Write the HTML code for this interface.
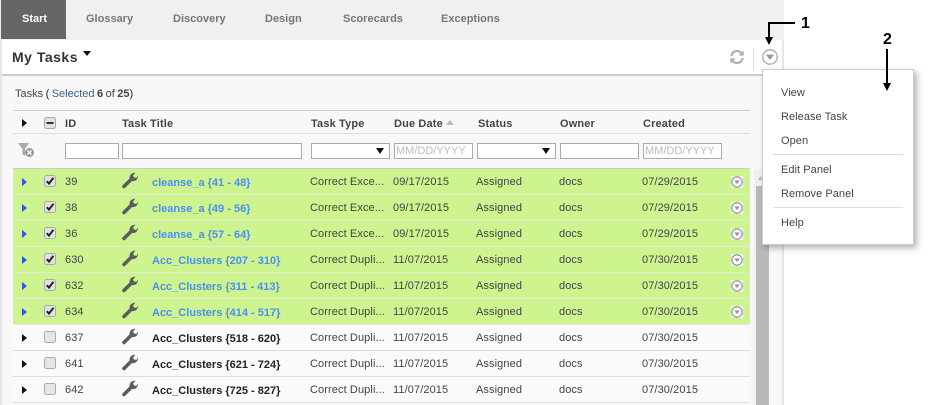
<!DOCTYPE html>
<html><head><meta charset="utf-8">
<style>
html,body{margin:0;padding:0;background:#fff}
body{width:930px;height:405px;overflow:hidden;position:relative;font:11px "Liberation Sans",Arial,sans-serif;color:#444;letter-spacing:.1px}
.a{position:absolute}
.t{position:absolute;white-space:nowrap}
.tab{position:absolute;top:13px;font-weight:bold;color:#777;line-height:13px;letter-spacing:0}
.h{position:absolute;top:118px;font-weight:bold;color:#444;line-height:13px;white-space:nowrap;letter-spacing:.15px}
.in{position:absolute;top:143px;height:14px;background:#fff;border:1px solid #aaa;box-sizing:content-box}
.ph{position:absolute;top:144px;color:#bbb;line-height:14px;letter-spacing:0}
.row{position:absolute;left:13px;width:737px;height:25px;background:#fafafa;border-bottom:1px solid #ddd}
.row.g{background:#cdf48e;border-bottom:1px solid #e2ecd4}
.row span{position:absolute;top:6px;line-height:14px;white-space:nowrap}
.row .ti{left:139px;top:7px;font-weight:bold;color:#222;letter-spacing:0}
.row.g .ti{color:#4a90f0}
.row svg{position:absolute}
.m{position:absolute;left:781px;line-height:13px;color:#444;white-space:nowrap;letter-spacing:.05px}
.s{position:absolute;left:773px;width:130px;height:1px;background:#ddd}
</style></head><body>
<svg width="0" height="0" style="position:absolute">
<defs>
<symbol id="wr" viewBox="0 0 17 17"><path d="M3 14.5 10.5 7" fill="none" stroke="#5c5c5c" stroke-width="3.6" stroke-linecap="round"/><path d="M8.6 6.4C8.2 3 11 .4 14.4 .8L12 3.6 13.2 5.6 15.6 5.8 16.8 3.4C17.4 7 14.6 9.6 11 9Z" fill="#5c5c5c"/></symbol>
<symbol id="ck" viewBox="0 0 12 12"><rect x=".5" y=".5" width="11" height="11" rx="2" fill="#e2e2e2" stroke="#aaa"/><path d="M2.8 6.2 5 8.6 9.4 2.8" fill="none" stroke="#222" stroke-width="2"/></symbol>
<symbol id="un" viewBox="0 0 12 12"><rect x=".5" y=".5" width="11" height="11" rx="2" fill="#e6e6e6" stroke="#aaa"/></symbol>
<symbol id="dd" viewBox="0 0 12 12"><rect width="12" height="12" fill="#fff"/><circle cx="6" cy="6" r="5.2" fill="none" stroke="#999" stroke-width="1.3"/><path d="M3.2 4.4H8.8L6 8.2Z" fill="#999"/></symbol>
</defs></svg>

<!-- tab bar -->
<div class="a" style="left:0;top:0;width:784px;height:40px;background:#f0f0f0"></div>
<div class="a" style="left:1px;top:0;width:65px;height:39px;background:#666"></div>
<div class="tab" style="left:22px;color:#fff">Start</div>
<div class="tab" style="left:86px">Glossary</div>
<div class="tab" style="left:173px">Discovery</div>
<div class="tab" style="left:265px">Design</div>
<div class="tab" style="left:343px">Scorecards</div>
<div class="tab" style="left:441px">Exceptions</div>

<!-- panel -->
<div class="a" style="left:0;top:40px;width:2px;height:365px;background:#e6e6e6"></div>
<div class="a" style="left:2px;top:40px;width:780px;height:35px;background:#fff"></div>
<div class="a" style="left:2px;top:74px;width:780px;height:2px;background:#ccc"></div>
<div class="a" style="left:2px;top:76px;width:780px;height:329px;background:#f8f8f8"></div>
<div class="a" style="left:782px;top:40px;width:2px;height:365px;background:#e6e6e6"></div>

<div class="t" style="left:12px;top:49px;font-size:14px;font-weight:bold;color:#333;line-height:16px;letter-spacing:.5px">My Tasks</div>
<svg class="a" style="left:83px;top:51px" width="9" height="5"><path d="M0 0H8L4 5Z" fill="#111"/></svg>

<svg class="a" style="left:729px;top:49px" width="16" height="16" viewBox="0 0 16 16" fill="none"><path d="M2.4 7A5.6 5.6 0 0 1 12.4 4.2" stroke="#aaa" stroke-width="2"/><path d="M13.6 9A5.6 5.6 0 0 1 3.6 11.8" stroke="#aaa" stroke-width="2"/><path d="M14.6 1.4V6.6H9.6Z M1.4 14.6V9.4H6.4Z" fill="#aaa"/></svg>
<div class="a" style="left:753px;top:48px;width:1px;height:22px;background:#ddd"></div>
<svg class="a" style="left:762px;top:49px" width="16" height="16" viewBox="0 0 16 16"><circle cx="8" cy="8" r="7.2" fill="#fff" stroke="#aaa" stroke-width="1.3"/><path d="M3.8 5.6H12.2L8 11Z" fill="#999"/></svg>

<div class="t" style="left:15px;top:88px;line-height:13px;letter-spacing:0;word-spacing:-.6px">Tasks <b style="font-weight:normal;color:#222">(</b> <span style="color:#3a5f8a">Selected</span> <b style="color:#444">6</b> of <b style="color:#444">25</b><b style="font-weight:normal;color:#222">)</b></div>

<!-- headers -->
<div class="a" style="left:13px;top:110px;width:737px;height:1px;background:#ccc"></div>
<div class="a" style="left:13px;top:133px;width:737px;height:1px;background:#ddd"></div>
<svg class="a" style="left:22px;top:119px" width="5" height="8"><path d="M0 0 5 4 0 8Z" fill="#111"/></svg>
<svg class="a" style="left:44px;top:117px" width="12" height="12" viewBox="0 0 12 12"><rect x=".5" y=".5" width="11" height="11" rx="2" fill="#e2e2e2" stroke="#aaa"/><rect x="2.5" y="5" width="7" height="2" fill="#333"/></svg>
<div class="h" style="left:65px">ID</div>
<div class="h" style="left:122px">Task Title</div>
<div class="h" style="left:311px">Task Type</div>
<div class="h" style="left:394px">Due Date</div>
<svg class="a" style="left:446px;top:120px" width="8" height="5"><path d="M0 5 4 0 8 5Z" fill="#bbb"/></svg>
<div class="h" style="left:478px">Status</div>
<div class="h" style="left:560px">Owner</div>
<div class="h" style="left:643px">Created</div>

<!-- filter row -->
<svg class="a" style="left:18px;top:143px" width="17" height="15" viewBox="0 0 17 15"><path d="M0 0H11L7 6V13L4.5 11.5V6Z" fill="#aaa"/><circle cx="11.5" cy="9.5" r="4.5" fill="#999"/><path d="M9.5 7.5 13.5 11.5M13.5 7.5 9.5 11.5" stroke="#fff" stroke-width="1.3"/></svg>
<div class="in" style="left:65px;width:52px"></div>
<div class="in" style="left:122px;width:178px"></div>
<div class="in" style="left:311px;width:77px"></div>
<svg class="a" style="left:376px;top:148px" width="8" height="6"><path d="M0 0H8L4 6Z" fill="#111"/></svg>
<div class="in" style="left:394px;width:77px"></div><div class="ph" style="left:396px">MM/DD/YYYY</div>
<div class="in" style="left:477px;width:77px"></div>
<svg class="a" style="left:542px;top:148px" width="8" height="6"><path d="M0 0H8L4 6Z" fill="#111"/></svg>
<div class="in" style="left:560px;width:77px"></div>
<div class="in" style="left:643px;width:77px"></div><div class="ph" style="left:645px">MM/DD/YYYY</div>
<div class="a" style="left:13px;top:168px;width:737px;height:1px;background:#ccc"></div>

<!-- rows -->
<div class="row g" style="top:169px"><svg style="left:9px;top:9px" width="5" height="8"><path d="M0 0 5 4 0 8Z" fill="#3355dd"/></svg><svg style="left:31px;top:6px" width="12" height="12"><use href="#ck"/></svg><span style="left:52px">39</span><svg style="left:108px;top:3px" width="17" height="17"><use href="#wr"/></svg><span class="ti">cleanse_a {41 - 48}</span><span style="left:297px">Correct Exce...</span><span style="left:380px">09/17/2015</span><span style="left:463px">Assigned</span><span style="left:546px">docs</span><span style="left:629px">07/29/2015</span><svg style="left:718px;top:7px" width="12" height="12"><use href="#dd"/></svg></div>
<div class="row g" style="top:195px"><svg style="left:9px;top:9px" width="5" height="8"><path d="M0 0 5 4 0 8Z" fill="#3355dd"/></svg><svg style="left:31px;top:6px" width="12" height="12"><use href="#ck"/></svg><span style="left:52px">38</span><svg style="left:108px;top:3px" width="17" height="17"><use href="#wr"/></svg><span class="ti">cleanse_a {49 - 56}</span><span style="left:297px">Correct Exce...</span><span style="left:380px">09/17/2015</span><span style="left:463px">Assigned</span><span style="left:546px">docs</span><span style="left:629px">07/29/2015</span><svg style="left:718px;top:7px" width="12" height="12"><use href="#dd"/></svg></div>
<div class="row g" style="top:221px"><svg style="left:9px;top:9px" width="5" height="8"><path d="M0 0 5 4 0 8Z" fill="#3355dd"/></svg><svg style="left:31px;top:6px" width="12" height="12"><use href="#ck"/></svg><span style="left:52px">36</span><svg style="left:108px;top:3px" width="17" height="17"><use href="#wr"/></svg><span class="ti">cleanse_a {57 - 64}</span><span style="left:297px">Correct Exce...</span><span style="left:380px">09/17/2015</span><span style="left:463px">Assigned</span><span style="left:546px">docs</span><span style="left:629px">07/29/2015</span><svg style="left:718px;top:7px" width="12" height="12"><use href="#dd"/></svg></div>
<div class="row g" style="top:247px"><svg style="left:9px;top:9px" width="5" height="8"><path d="M0 0 5 4 0 8Z" fill="#3355dd"/></svg><svg style="left:31px;top:6px" width="12" height="12"><use href="#ck"/></svg><span style="left:52px">630</span><svg style="left:108px;top:3px" width="17" height="17"><use href="#wr"/></svg><span class="ti">Acc_Clusters {207 - 310}</span><span style="left:297px">Correct Dupli...</span><span style="left:380px">11/07/2015</span><span style="left:463px">Assigned</span><span style="left:546px">docs</span><span style="left:629px">07/30/2015</span><svg style="left:718px;top:7px" width="12" height="12"><use href="#dd"/></svg></div>
<div class="row g" style="top:273px"><svg style="left:9px;top:9px" width="5" height="8"><path d="M0 0 5 4 0 8Z" fill="#3355dd"/></svg><svg style="left:31px;top:6px" width="12" height="12"><use href="#ck"/></svg><span style="left:52px">632</span><svg style="left:108px;top:3px" width="17" height="17"><use href="#wr"/></svg><span class="ti">Acc_Clusters {311 - 413}</span><span style="left:297px">Correct Dupli...</span><span style="left:380px">11/07/2015</span><span style="left:463px">Assigned</span><span style="left:546px">docs</span><span style="left:629px">07/30/2015</span><svg style="left:718px;top:7px" width="12" height="12"><use href="#dd"/></svg></div>
<div class="row g" style="top:299px"><svg style="left:9px;top:9px" width="5" height="8"><path d="M0 0 5 4 0 8Z" fill="#3355dd"/></svg><svg style="left:31px;top:6px" width="12" height="12"><use href="#ck"/></svg><span style="left:52px">634</span><svg style="left:108px;top:3px" width="17" height="17"><use href="#wr"/></svg><span class="ti">Acc_Clusters {414 - 517}</span><span style="left:297px">Correct Dupli...</span><span style="left:380px">11/07/2015</span><span style="left:463px">Assigned</span><span style="left:546px">docs</span><span style="left:629px">07/30/2015</span><svg style="left:718px;top:7px" width="12" height="12"><use href="#dd"/></svg></div>
<div class="row" style="top:325px"><svg style="left:9px;top:9px" width="5" height="8"><path d="M0 0 5 4 0 8Z" fill="#111"/></svg><svg style="left:31px;top:6px" width="12" height="12"><use href="#un"/></svg><span style="left:52px">637</span><svg style="left:108px;top:3px" width="17" height="17"><use href="#wr"/></svg><span class="ti">Acc_Clusters {518 - 620}</span><span style="left:297px">Correct Dupli...</span><span style="left:380px">11/07/2015</span><span style="left:463px">Assigned</span><span style="left:546px">docs</span><span style="left:629px">07/30/2015</span></div>
<div class="row" style="top:351px"><svg style="left:9px;top:9px" width="5" height="8"><path d="M0 0 5 4 0 8Z" fill="#111"/></svg><svg style="left:31px;top:6px" width="12" height="12"><use href="#un"/></svg><span style="left:52px">641</span><svg style="left:108px;top:3px" width="17" height="17"><use href="#wr"/></svg><span class="ti">Acc_Clusters {621 - 724}</span><span style="left:297px">Correct Dupli...</span><span style="left:380px">11/07/2015</span><span style="left:463px">Assigned</span><span style="left:546px">docs</span><span style="left:629px">07/30/2015</span></div>
<div class="row" style="top:377px"><svg style="left:9px;top:9px" width="5" height="8"><path d="M0 0 5 4 0 8Z" fill="#111"/></svg><svg style="left:31px;top:6px" width="12" height="12"><use href="#un"/></svg><span style="left:52px">642</span><svg style="left:108px;top:3px" width="17" height="17"><use href="#wr"/></svg><span class="ti">Acc_Clusters {725 - 827}</span><span style="left:297px">Correct Dupli...</span><span style="left:380px">11/07/2015</span><span style="left:463px">Assigned</span><span style="left:546px">docs</span><span style="left:629px">07/30/2015</span></div>

<!-- scrollbar -->
<div class="a" style="left:754px;top:169px;width:15px;height:236px;background:#f0f0f0"></div>
<div class="a" style="left:756px;top:186px;width:13px;height:219px;background:#b9b9b9"></div>
<svg class="a" style="left:758px;top:176px" width="5" height="4"><path d="M0 4 2.5 0 5 4Z" fill="#bbb"/></svg>

<!-- menu -->
<div class="a" style="left:762px;top:69px;width:150px;height:174px;background:#fff;border:1px solid #ccc;box-shadow:3px 3px 6px rgba(0,0,0,.3)"></div>
<div class="m" style="top:87px">View</div>
<div class="m" style="top:111px">Release Task</div>
<div class="m" style="top:135px">Open</div>
<div class="s" style="top:154px"></div>
<div class="m" style="top:164px">Edit Panel</div>
<div class="m" style="top:188px">Remove Panel</div>
<div class="s" style="top:207px"></div>
<div class="m" style="top:217px">Help</div>

<!-- annotations -->
<div class="a" style="left:769px;top:22px;width:26px;height:2px;background:#000"></div>
<div class="a" style="left:768px;top:22px;width:2px;height:18px;background:#000"></div>
<svg class="a" style="left:765px;top:37px" width="8" height="8"><path d="M0 0H8L4 8Z" fill="#000"/></svg>
<div class="t" style="left:801px;top:15px;font-size:16px;font-weight:bold;color:#000;line-height:18px;letter-spacing:0">1</div>
<div class="a" style="left:886px;top:49px;width:2px;height:36px;background:#000"></div>
<svg class="a" style="left:883px;top:83px" width="8" height="8"><path d="M0 0H8L4 8Z" fill="#000"/></svg>
<div class="t" style="left:883px;top:31px;font-size:16px;font-weight:bold;color:#000;line-height:18px;letter-spacing:0">2</div>
</body></html>
